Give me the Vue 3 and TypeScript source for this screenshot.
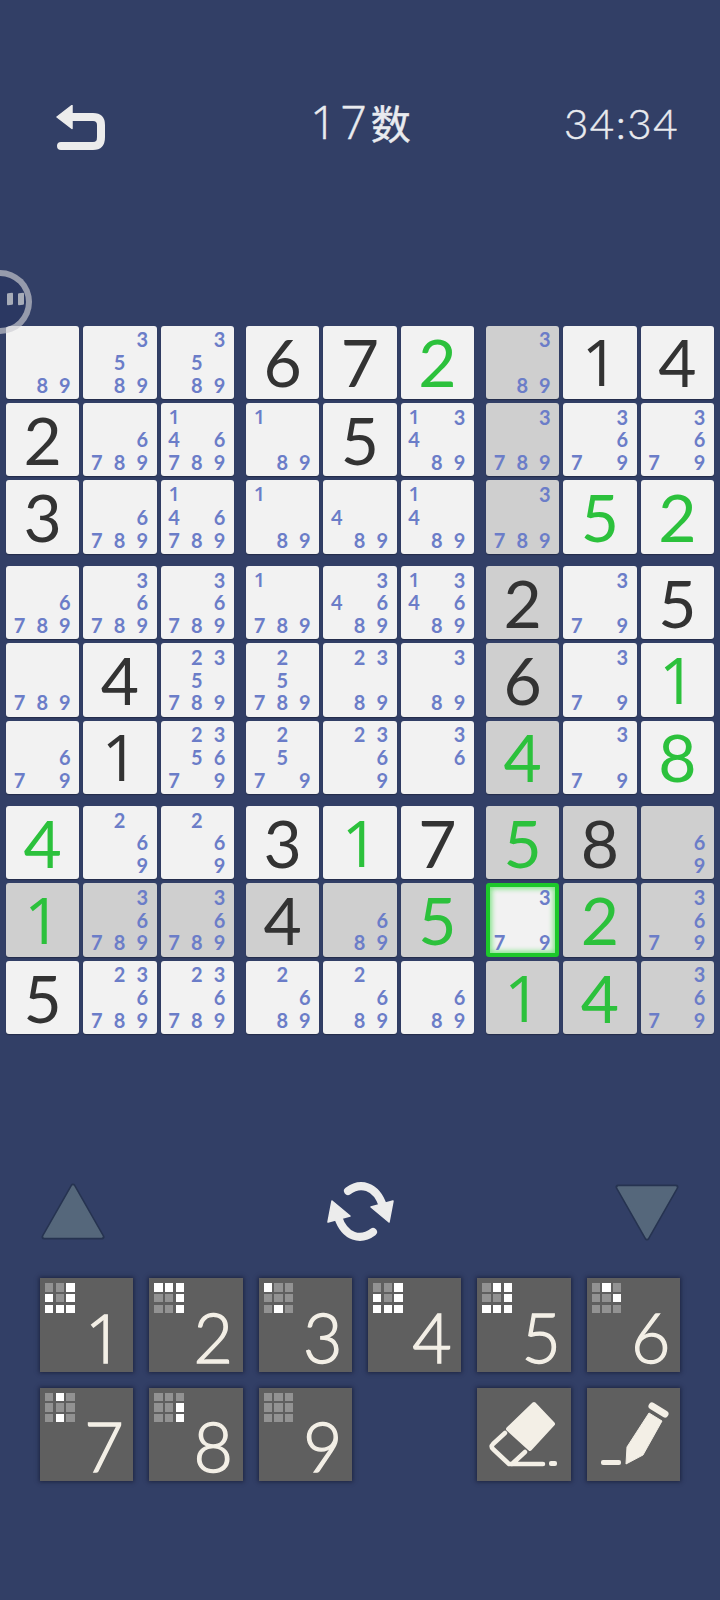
<script setup lang="ts">
import { computed } from 'vue'

// '=6' 黑色已填, '*2' 绿色已填, 其余是候选数
const rows: string[][] = [
  ['89', '3589', '3589', '=6', '=7', '*2', '389', '=1', '=4'],
  ['=2', '6789', '146789', '189', '=5', '13489', '3789', '3679', '3679'],
  ['=3', '6789', '146789', '189', '489', '1489', '3789', '*5', '*2'],
  ['6789', '36789', '36789', '1789', '34689', '134689', '=2', '379', '=5'],
  ['789', '=4', '235789', '25789', '2389', '389', '=6', '379', '*1'],
  ['679', '=1', '235679', '2579', '2369', '36', '*4', '379', '*8'],
  ['*4', '269', '269', '=3', '*1', '=7', '*5', '=8', '69'],
  ['*1', '36789', '36789', '=4', '689', '*5', '379', '*2', '3679'],
  ['=5', '236789', '236789', '2689', '2689', '689', '*1', '*4', '3679'],
]
const selected = { r: 7, c: 6 }

const blocks = computed(() => {
  const out: { key: string; text: string; kind: string; notes: number[]; gray: boolean; sel: boolean }[][] = []
  for (let b = 0; b < 9; b++) {
    const cells = []
    for (let i = 0; i < 9; i++) {
      const r = Math.floor(b / 3) * 3 + Math.floor(i / 3)
      const c = (b % 3) * 3 + (i % 3)
      const v = rows[r][c]
      const fixed = v[0] === '=' || v[0] === '*'
      const sel = r === selected.r && c === selected.c
      cells.push({
        key: `${r}-${c}`,
        text: fixed ? v[1] : '',
        kind: v[0] === '*' ? 'green' : 'black',
        notes: fixed ? [] : [1, 2, 3, 4, 5, 6, 7, 8, 9].map(n => (v.includes(String(n)) ? n : 0)),
        gray: !sel && (r === selected.r || c === selected.c || (r >= 6 && c >= 6)),
        sel,
      })
    }
    out.push(cells)
  }
  return out
})

// 每个数字在九宫里已完成的位置
const keys = [
  { n: 1, mask: '001101111' },
  { n: 2, mask: '111001001' },
  { n: 3, mask: '100000010' },
  { n: 4, mask: '001101111' },
  { n: 5, mask: '011001111' },
  { n: 6, mask: '010001000' },
  { n: 7, mask: '010000010' },
  { n: 8, mask: '000001001' },
  { n: 9, mask: '000000000' },
]
</script>

<template>
  <div class="page">
    <header class="top">
      <svg class="undo" viewBox="0 0 50 48">
        <path d="M1 12 L16 0.5 V23.5 Z" fill="#ececec" stroke="#ececec" stroke-width="1.5" stroke-linejoin="round" />
        <path d="M14 12 H37 Q45 12 45 20 V32 Q45 41 37 41 H5" fill="none" stroke="#ececec" stroke-width="8" stroke-linecap="round" />
      </svg>
      <div class="title">17<span class="kanji">数</span></div>
      <div class="time">34:34</div>
    </header>

    <div class="floater"><i></i><i></i></div>

    <main class="board">
      <div v-for="(block, b) in blocks" :key="b" class="block">
        <div v-for="cell in block" :key="cell.key" class="cell" :class="{ gray: cell.gray, sel: cell.sel }">
          <span v-if="cell.text" class="big" :class="[cell.kind, { one: cell.text === '1' }]">{{ cell.text }}</span>
          <div v-else class="notes">
            <span v-for="(n, i) in cell.notes" :key="i" :class="{ one: n === 1 }">{{ n || '' }}</span>
          </div>
        </div>
      </div>
    </main>

    <div class="controls">
      <svg class="tri" viewBox="0 0 64 58">
        <path d="M32 3 L61 54 H3 Z" fill="#263350" stroke="#263350" stroke-width="5" stroke-linejoin="round" />
        <path d="M32 3.5 L60.5 53.5 H3.5 Z" fill="#55677b" stroke="#55677b" stroke-width="2.5" stroke-linejoin="round" />
      </svg>
      <svg class="swap" viewBox="-2 2 85 80">
        <path d="M28 21 C40 12 56 15 63 36" fill="none" stroke="#ececec" stroke-width="8" stroke-linecap="round" />
        <path d="M51 37 L73 31 L69 52 Z" fill="#ececec" stroke="#ececec" stroke-width="1.5" stroke-linejoin="round" />
        <g transform="rotate(180 40.5 41.5)">
          <path d="M28 21 C40 12 56 15 63 36" fill="none" stroke="#ececec" stroke-width="8" stroke-linecap="round" />
          <path d="M51 37 L73 31 L69 52 Z" fill="#ececec" stroke="#ececec" stroke-width="1.5" stroke-linejoin="round" />
        </g>
      </svg>
      <svg class="tri" viewBox="0 0 64 58">
        <path d="M3 4 H61 L32 55 Z" fill="#263350" stroke="#263350" stroke-width="5" stroke-linejoin="round" />
        <path d="M3.5 4.5 H60.5 L32 54.5 Z" fill="#55677b" stroke="#55677b" stroke-width="2.5" stroke-linejoin="round" />
      </svg>
    </div>

    <section class="keypad">
      <button v-for="k in keys" :key="k.n" class="key">
        <span class="mini">
          <i v-for="(m, i) in k.mask" :key="i" :class="{ on: m === '1' }"></i>
        </span>
        <span class="num" :class="{ one: k.n === 1 }">{{ k.n }}</span>
      </button>
      <span></span>
      <button class="key">
        <svg class="tool" viewBox="0 0 93.33 93.33">
          <path d="M57 16 L76 36 L53 61 L31 41 Z" fill="#f3efe6" stroke="#f3efe6" stroke-width="4" stroke-linejoin="round" />
          <path d="M28 45 L16 56 Q13.5 58.5 16 61 L32 76 H66 M48 64 L35 76" fill="none" stroke="#f3efe6" stroke-width="4.5" stroke-linecap="round" stroke-linejoin="round" />
          <rect x="72" y="73" width="8" height="5" rx="2" fill="#f3efe6" />
        </svg>
      </button>
      <button class="key">
        <svg class="tool" viewBox="0 0 93.33 93.33">
          <path d="M65 18 L78 26" stroke="#f3efe6" stroke-width="7" stroke-linecap="round" fill="none" />
          <path d="M62 25 L75 33 L56 67 L39 76 L40 59 Z" fill="#f3efe6" stroke="#f3efe6" stroke-width="1" stroke-linejoin="round" />
          <rect x="14" y="72" width="20" height="5" rx="2" fill="#f3efe6" />
        </svg>
      </button>
    </section>
  </div>
</template>

<style scoped>
.page {
  position: relative;
  width: 720px;
  height: 1600px;
  overflow: hidden;
  background: #323f66;
  font-family: Lato, "Noto Sans CJK SC", sans-serif;
}

.top {
  display: grid;
  grid-template-columns: 1fr auto 1fr;
  align-items: center;
  height: 48px;
  padding: 102px 41px 0 42px;
  color: #e9ebef;
}
.undo { width: 50px; height: 48px; margin: 3px 0 0 14px; align-self: start; }
.title {
  font-family: "Open Sans", "Noto Sans CJK SC", sans-serif;
  font-size: 46px;
  font-weight: 300;
  letter-spacing: 4px;
  line-height: 48px;
  margin-top: -10px;
  white-space: nowrap;
  -webkit-text-stroke: 0.5px #e9ebef;
}
.kanji {
  font-size: 40px;
  font-weight: 400;
  letter-spacing: 0;
}
.time {
  justify-self: end;
  font-size: 42px;
  font-weight: 300;
  letter-spacing: 1.5px;
  line-height: 48px;
  margin-top: -10px;
  -webkit-text-stroke: 0.5px #e9ebef;
}

.floater {
  position: absolute;
  left: -32px;
  top: 270px;
  width: 52px;
  height: 52px;
  border: 6px solid rgba(205, 205, 210, 0.65);
  border-radius: 50%;
  background: #2b3862;
  background-clip: padding-box;
  display: flex;
  align-items: center;
  justify-content: flex-end;
  gap: 5px;
  z-index: 2;
}
.floater i {
  display: block;
  width: 6px;
  height: 12px;
  background: #a7acb8;
  border-radius: 1px;
  transform: translate(-2px, -3px) skewY(-6deg);
}

.board {
  display: grid;
  grid-template-columns: repeat(3, 228px);
  gap: 12px;
  margin: 175.7px 0 0 6px;
}
.block {
  display: grid;
  grid-template-columns: repeat(3, 73.33px);
  gap: 4px;
}
.cell {
  height: 73.4px;
  box-sizing: border-box;
  background: #f2f2f2;
  border-radius: 3px;
  box-shadow: 0 1px 1px rgba(20, 25, 45, 0.5);
  display: flex;
  align-items: center;
  justify-content: center;
}
.cell.gray { background: #cfcfcf; }
.cell.sel {
  border: 4px solid #1dc82a;
  box-shadow: inset 0 0 5px 2px rgba(60, 220, 70, 0.6);
}
.big {
  font-size: 66px;
  line-height: 1;
}
.big.one {
  font-family: "Open Sans", sans-serif;
  font-size: 64px;
}
.big.black { color: #333; }
.big.green { color: #2cc13c; }

.notes {
  display: grid;
  flex: none;
  grid-template-columns: repeat(3, 22.7px);
  grid-template-rows: repeat(3, 22.7px);
  width: 68px;
  margin-right: 1px;
  color: #6b7dc8;
  font-size: 20px;
  font-weight: 700;
  line-height: 22.7px;
  text-align: center;
}
.notes .one { font-family: "Open Sans", sans-serif; font-weight: 600; }

.controls {
  display: flex;
  justify-content: space-between;
  align-items: center;
  height: 60px;
  margin-top: 147.7px;
  padding: 0 41px;
}
.tri { width: 64px; height: 58px; }
.swap { width: 85px; height: 80px; }

.keypad {
  display: grid;
  grid-template-columns: repeat(6, 93.33px);
  grid-auto-rows: 93.33px;
  gap: 16px;
  margin: 36.5px 0 0 40px;
}
.key {
  position: relative;
  display: block;
  padding: 0;
  border: none;
  background: #5f5f5f;
  box-shadow: 0 0 4px 1px rgba(20, 25, 50, 0.7);
  color: #f3efe6;
  font-family: inherit;
}
.mini {
  position: absolute;
  left: 5px;
  top: 5px;
  display: grid;
  grid-template-columns: repeat(3, 8.3px);
  gap: 2.4px;
}
.mini i {
  display: block;
  height: 8.3px;
  background: #929292;
}
.mini i.on { background: #fff; }
.num {
  position: absolute;
  left: 34px;
  width: 60px;
  bottom: 1px;
  font-size: 68px;
  line-height: 68px;
  font-weight: 300;
  text-align: center;
  -webkit-text-stroke: 1.3px #f3efe6;
}
.num.one { font-family: "Open Sans", sans-serif; font-size: 66px; }
.tool { display: block; width: 100%; height: 100%; }
</style>

<style>
body { background: #323f66; }
</style>
